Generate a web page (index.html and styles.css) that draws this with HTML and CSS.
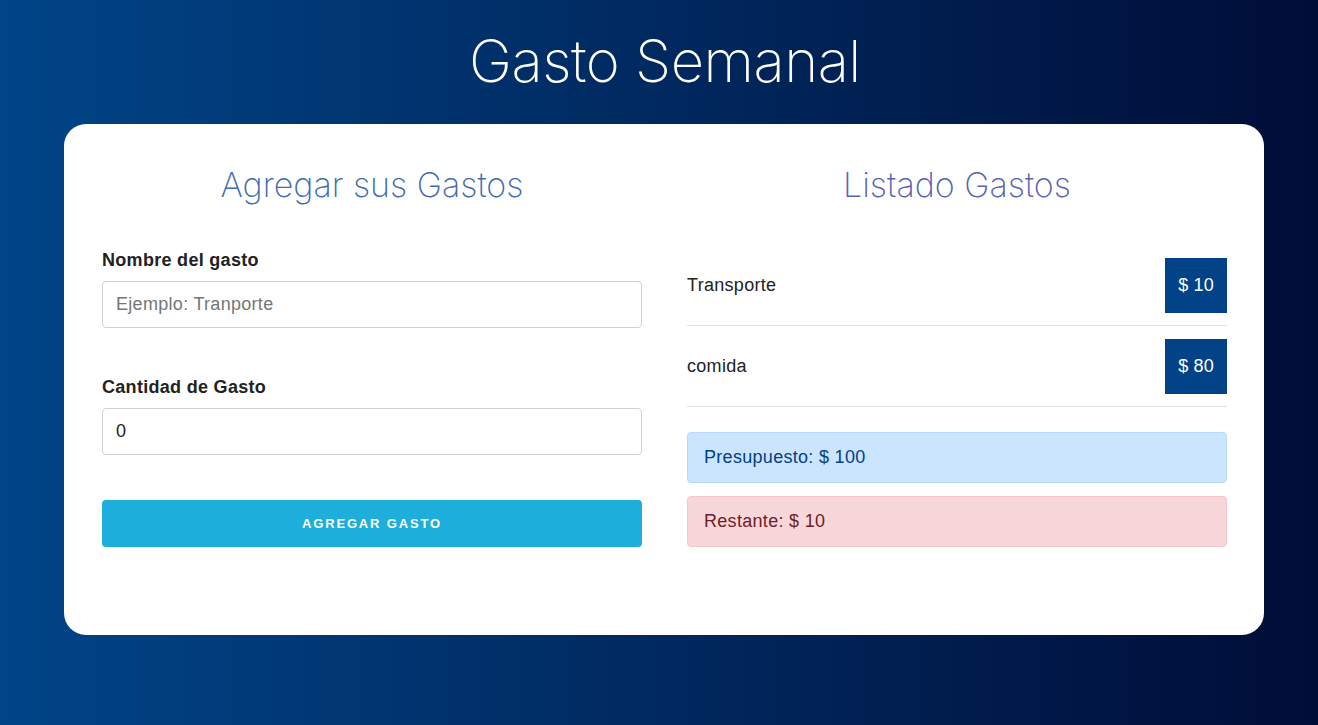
FILE: index.html
```html
<!DOCTYPE html>
<html lang="es">
<head>
<meta charset="utf-8">
<title>Gasto Semanal</title>
<link rel="stylesheet" href="styles.css">
</head>
<body>
  <header class="top">
    <h1 class="title">Gasto Semanal</h1>
  </header>
  <main class="card">
    <section class="col">
      <h2 class="heading heading-left">Agregar sus Gastos</h2>
      <form class="form">
        <label class="label" for="nombre">Nombre del gasto</label>
        <input class="input" id="nombre" type="text" placeholder="Ejemplo: Tranporte">
        <label class="label label-second" for="cantidad">Cantidad de Gasto</label>
        <input class="input" id="cantidad" type="number" value="0">
        <button class="btn" type="button">Agregar Gasto</button>
      </form>
    </section>
    <section class="col">
      <h2 class="heading heading-right">Listado Gastos</h2>
      <ul class="list">
        <li class="item"><span class="item-name">Transporte</span><span class="badge">$ 10</span></li>
        <li class="item"><span class="item-name">comida</span><span class="badge">$ 80</span></li>
      </ul>
      <div class="alert alert-primary">Presupuesto: $ 100</div>
      <div class="alert alert-danger">Restante: $ 10</div>
    </section>
  </main>
</body>
</html>
```

FILE: styles.css
```css
html, body {
  margin: 0;
  padding: 0;
}

body {
  min-height: 725px;
  background: linear-gradient(to right, #004588, #000d37);
  font-family: "Liberation Sans", Arial, sans-serif;
  color: #222;
}

.top {
  height: 124px;
  display: flex;
  align-items: center;
  justify-content: center;
}

.title {
  margin: 0;
  padding-bottom: 2px;
  padding-left: 12px;
  font-family: Inter, Lato, sans-serif;
  font-weight: 200;
  font-size: 58px;
  letter-spacing: -0.5px;
  line-height: 1;
  color: #fff;
}

.card {
  box-sizing: border-box;
  margin-left: 64px;
  width: 1200px;
  height: 511px;
  background: #fff;
  border-radius: 22px;
  padding: 36px 37px 0 38px;
  display: grid;
  grid-template-columns: 540px 540px;
  column-gap: 45px;
  align-items: start;
}

.col {
  display: flex;
  flex-direction: column;
}

.heading {
  margin: 0;
  height: 50px;
  line-height: 50px;
  text-align: center;
  font-family: Inter, Lato, sans-serif;
  font-weight: 200;
  font-size: 34px;
  letter-spacing: 0;
}

.heading-left { color: #3f6cb3; }
.heading-right { color: #5763b3; }

.form {
  display: flex;
  flex-direction: column;
  margin-top: 39px;
}

.label {
  font-weight: bold;
  font-size: 18px;
  letter-spacing: 0.3px;
  line-height: 22px;
  color: #222;
  margin-bottom: 10px;
}

.label-second {
  margin-top: 48px;
}

.input {
  box-sizing: border-box;
  height: 47px;
  width: 100%;
  border: 1px solid #d1d1d1;
  border-radius: 4px;
  padding: 0 13px;
  font-family: "Liberation Sans", Arial, sans-serif;
  font-size: 18px;
  letter-spacing: 0.3px;
  color: #222;
  background: #fff;
  outline: none;
}

.input::placeholder { color: #757575; }

.input[type=number] { -moz-appearance: textfield; }
.input::-webkit-outer-spin-button,
.input::-webkit-inner-spin-button { -webkit-appearance: none; margin: 0; }

.btn {
  margin-top: 45px;
  height: 47px;
  width: 100%;
  border: none;
  border-radius: 4px;
  background: #1eaedb;
  color: #fff;
  font-family: "Liberation Sans", Arial, sans-serif;
  font-weight: bold;
  font-size: 13px;
  letter-spacing: 1.85px;
  text-transform: uppercase;
  cursor: pointer;
}

.list {
  list-style: none;
  margin: 35px 0 0;
  padding: 0;
}

.item {
  display: flex;
  justify-content: space-between;
  align-items: center;
  padding: 13px 0 12px;
  border-bottom: 1px solid #e1e1e1;
  font-size: 18px;
  letter-spacing: 0.3px;
  color: #222;
}

.badge {
  height: 55px;
  padding: 0 13px;
  display: flex;
  align-items: center;
  background: #014386;
  color: #fff;
  font-size: 18px;
  letter-spacing: 0.2px;
}

.alert {
  box-sizing: border-box;
  height: 51px;
  display: flex;
  align-items: center;
  padding: 0 16px;
  border: 1px solid;
  border-radius: 4px;
  font-size: 18px;
  letter-spacing: 0.3px;
}

.alert-primary {
  margin-top: 25px;
  background: #cce5ff;
  border-color: #b8daff;
  color: #004085;
}

.alert-danger {
  margin-top: 13px;
  background: #f8d7da;
  border-color: #f5c6cb;
  color: #721c24;
}
```
